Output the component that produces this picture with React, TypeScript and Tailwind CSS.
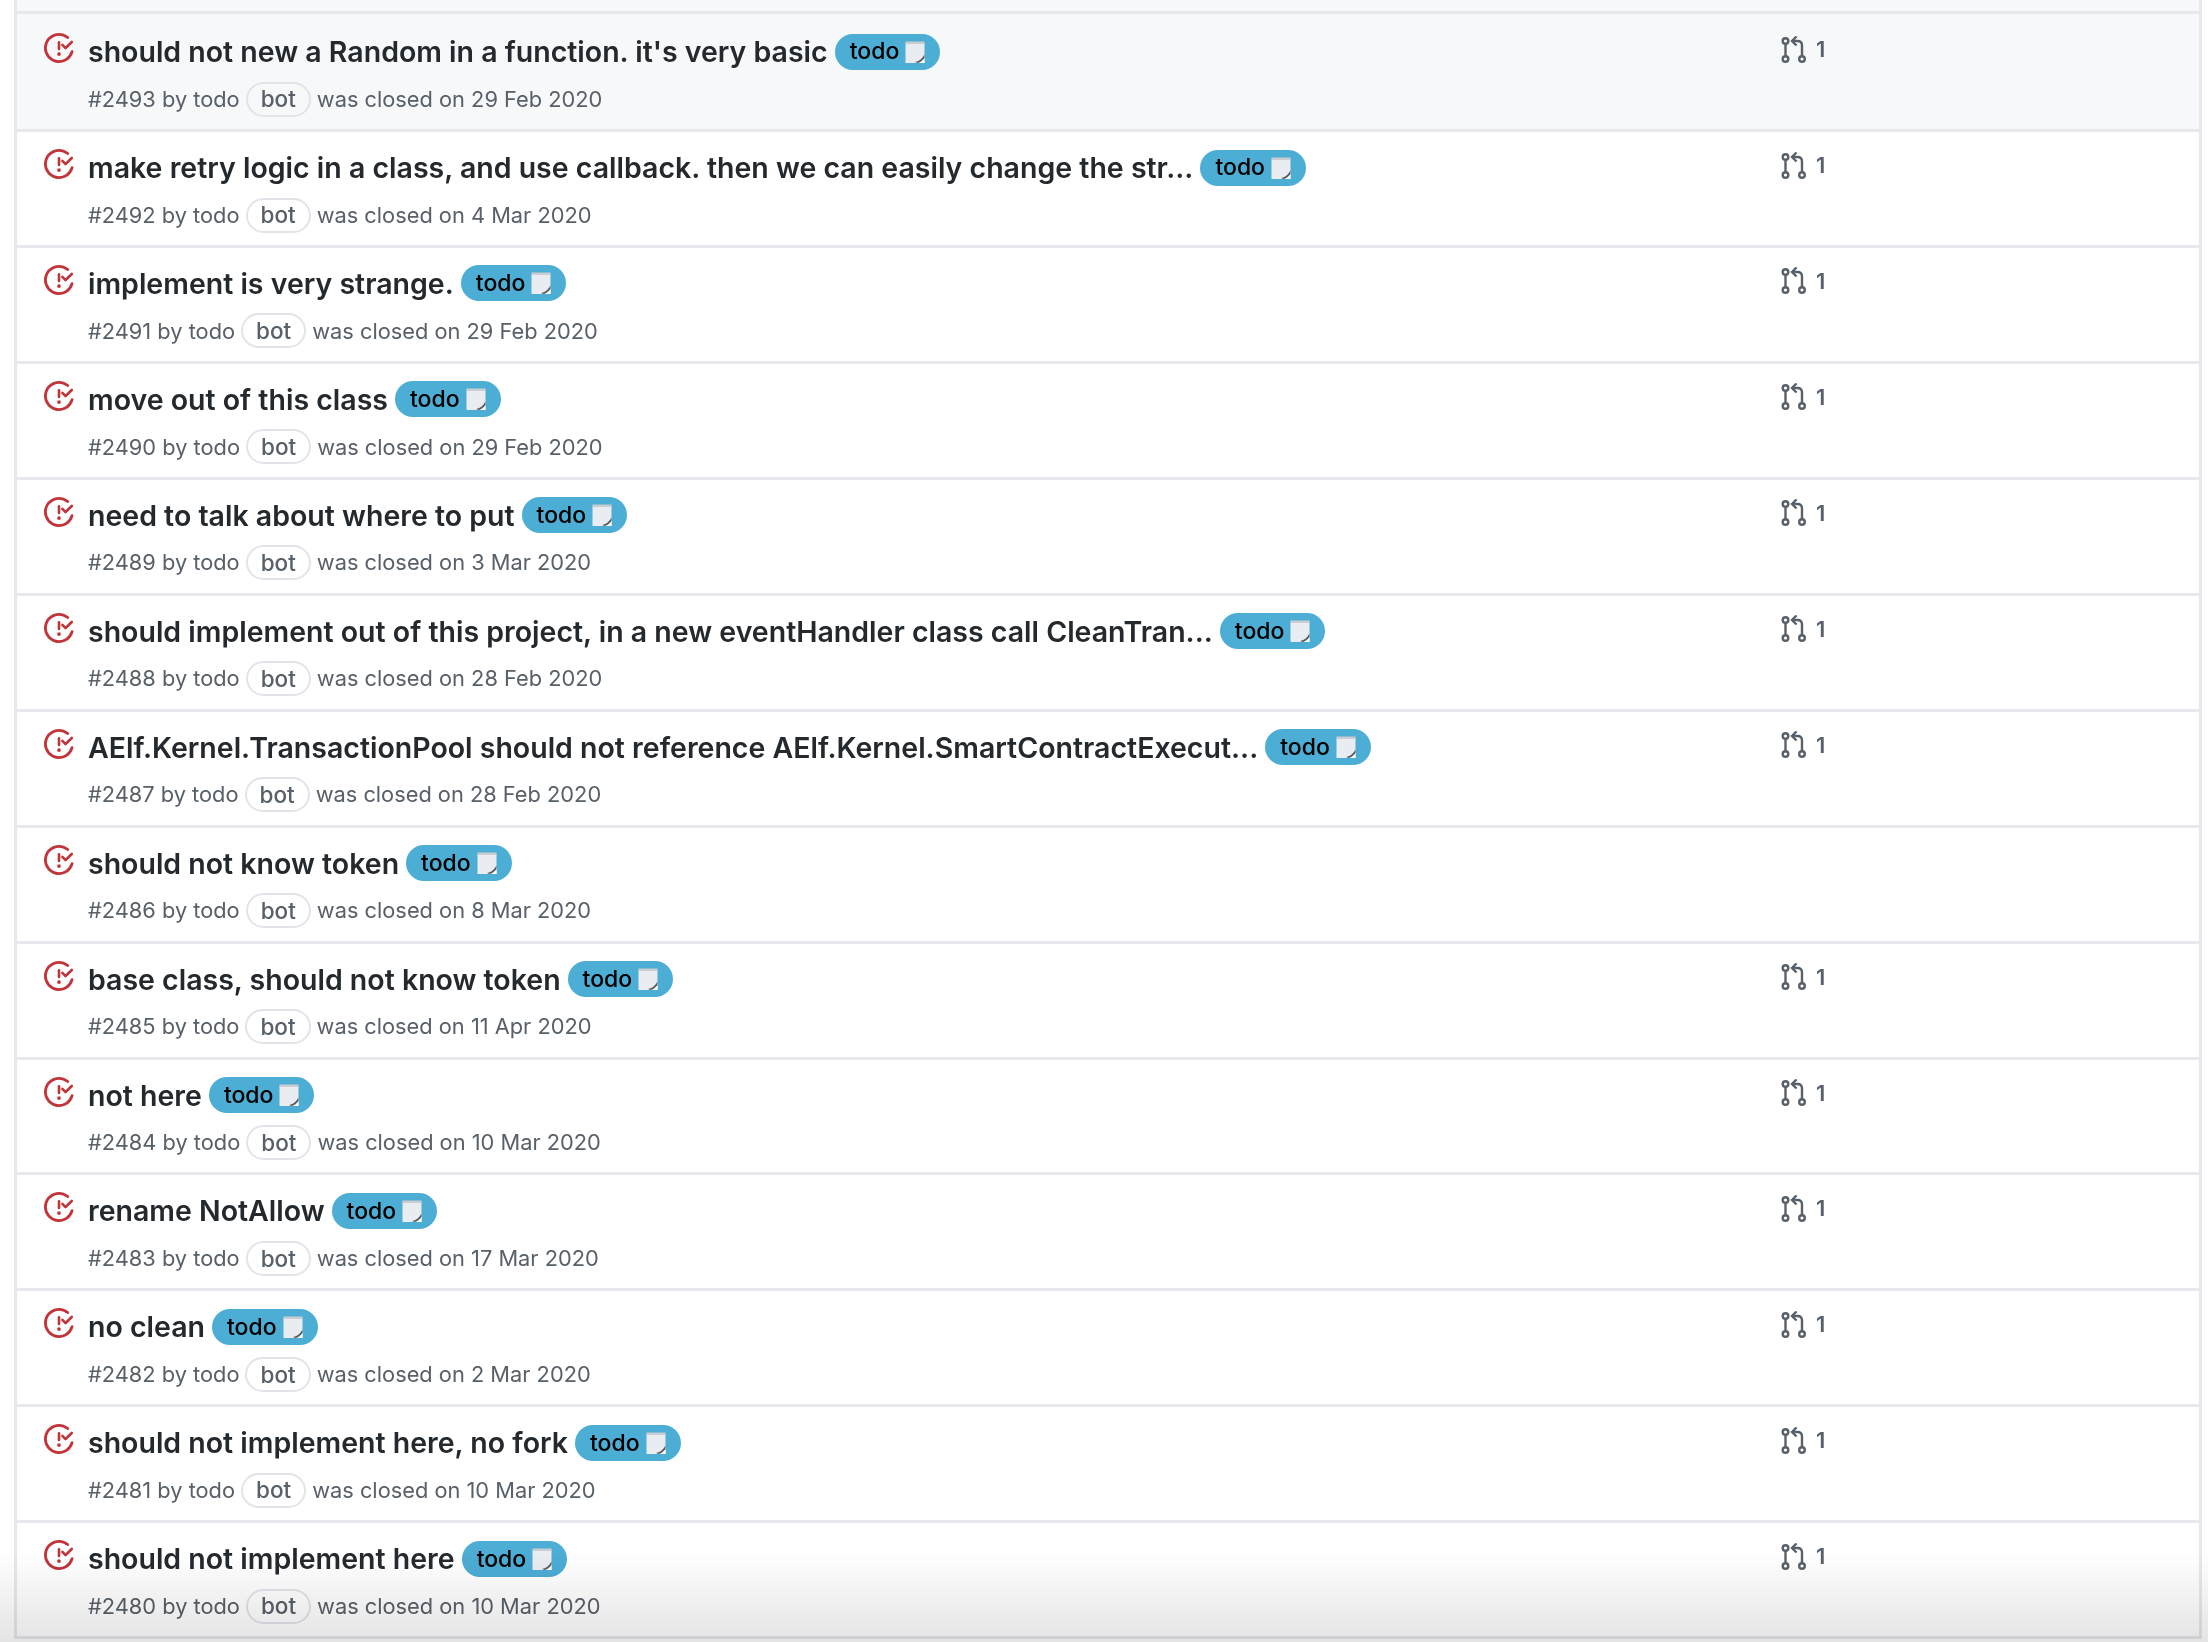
const rows: [string, number, string, boolean][] = [
  ["should not new a Random in a function. it's very basic", 2493, "29 Feb 2020", true],
  ["make retry logic in a class, and use callback. then we can easily change the str...", 2492, "4 Mar 2020", true],
  ["implement is very strange.", 2491, "29 Feb 2020", true],
  ["move out of this class", 2490, "29 Feb 2020", true],
  ["need to talk about where to put", 2489, "3 Mar 2020", true],
  ["should implement out of this project, in a new eventHandler class call CleanTran...", 2488, "28 Feb 2020", true],
  ["AElf.Kernel.TransactionPool should not reference AElf.Kernel.SmartContractExecut...", 2487, "28 Feb 2020", true],
  ["should not know token", 2486, "8 Mar 2020", false],
  ["base class, should not know token", 2485, "11 Apr 2020", true],
  ["not here", 2484, "10 Mar 2020", true],
  ["rename NotAllow", 2483, "17 Mar 2020", true],
  ["no clean", 2482, "2 Mar 2020", true],
  ["should not implement here, no fork", 2481, "10 Mar 2020", true],
  ["should not implement here", 2480, "10 Mar 2020", true],
];

function ClosedIcon() {
  return (
    <svg viewBox="0 0 16 16" className="h-[30px] w-[30px] shrink-0 text-[#c1343a]" fill="currentColor">
      <path d="M1.5 8a6.5 6.5 0 0110.65-5.003.75.75 0 00.959-1.153 8 8 0 102.592 8.33.75.75 0 10-1.444-.407A6.5 6.5 0 011.5 8z" />
      <path d="M8 12.2a1 1 0 100-2 1 1 0 000 2zm0-8a.7.7 0 01.7.7v3.6a.7.7 0 11-1.4 0V4.900A.7.7 0 018 4.200z" />
      <path d="M15.3 5.300a.7.7 0 00-1-1L11.500 7 10.300 5.800a.7.7 0 10-1 1l1.700 1.700a.7.7 0 001 0z" />
    </svg>
  );
}

function PrIcon() {
  return (
    <svg viewBox="0 0 26 28" className="h-[28px] w-[26px] shrink-0 text-[#586069]" fill="none" stroke="currentColor" strokeWidth="2.4">
      <circle cx="4.5" cy="5" r="2.8" />
      <circle cx="4.5" cy="23" r="2.8" />
      <circle cx="21" cy="23" r="2.8" />
      <path d="M4.5 8v12" />
      <path d="M21 20V9.5C21 6.5 19.500 5 16.500 5H12" />
      <path d="M15.500 0.500L11 5l4.500 4.500" />
    </svg>
  );
}

function NoteIcon() {
  return (
    <svg viewBox="0 0 20 22" className="h-[22px] w-[20px] shrink-0">
      <rect x="0.500" y="2" width="19" height="20" fill="#e9edf1" />
      <rect x="0.500" y="0.500" width="19" height="2.500" fill="#c9cdd2" />
      <path d="M19.500 14.500L19.500 22 11 22C14 21 17 18 19.500 14.500z" fill="#ffffff" />
      <path d="M10 21C14 20.500 17 18 19.500 13.500L19.500 17C17 20 15 21.500 12.500 22z" fill="#55595e" />
    </svg>
  );
}

function Row({ title, num, date, pr, first }: { title: string; num: number; date: string; pr: boolean; first: boolean }) {
  return (
    <div
      className={
        first
          ? "flex h-[118px] items-start border-b-[3px] border-[#e6e8ec] bg-[#f6f8fa] pt-[20px]"
          : "flex h-[115.95px] items-start border-b-[3px] border-[#e6e8ec] bg-white pt-[18px]"
      }
    >
      <div className="-mt-[1px] flex w-[57px] shrink-0 justify-end">
        <ClosedIcon />
      </div>
      <div className="ml-[14px] w-[1693px] shrink-0">
        <div className="flex h-[36px] items-center">
          <span className="text-[28.500px] font-semibold leading-[36px] whitespace-nowrap text-[#24292e]">{title}</span>
          <span className="-mt-[1px] ml-[7px] flex h-[36px] items-center gap-[6px] rounded-full bg-[#4cadd5] pl-[15px] pr-[15px] text-[23px] font-medium text-black">
            todo
            <NoteIcon />
          </span>
        </div>
        <div className="mt-[11px] flex h-[36px] items-center text-[21.800px] whitespace-nowrap text-[#586069]">
          <span>#{num} by todo</span>
          <span className="ml-[6px] flex h-[35px] items-center rounded-full border-[2px] border-[#e1e4e8] px-[13px] text-[22.500px] font-medium">bot</span>
          <span className="ml-[6px]">was closed on {date}</span>
        </div>
      </div>
      {pr && (
        <div className="-mt-[1px] flex items-center gap-[9px] text-[22px] font-semibold text-[#586069]">
          <PrIcon />
          <span>1</span>
        </div>
      )}
    </div>
  );
}

export default function App() {
  return (
    <div className="relative h-[1642px] w-[2208px] overflow-hidden bg-white font-['Inter','Liberation_Sans',sans-serif]">
      <div className="ml-[14px] w-[2188px] border-x-[3px] border-[#e6e8ec]">
        <div className="h-[14px] border-b-[3px] border-[#e6e8ec] bg-[#f6f8fa]" />
        {rows.map((r, i) => (
          <Row key={r[1]} title={r[0]} num={r[1]} date={r[2]} pr={r[3]} first={i === 0} />
        ))}
      </div>
      <div className="pointer-events-none absolute inset-x-0 bottom-0 h-[90px] bg-gradient-to-b from-white to-[#e4e4e4] mix-blend-multiply" />
    </div>
  );
}
